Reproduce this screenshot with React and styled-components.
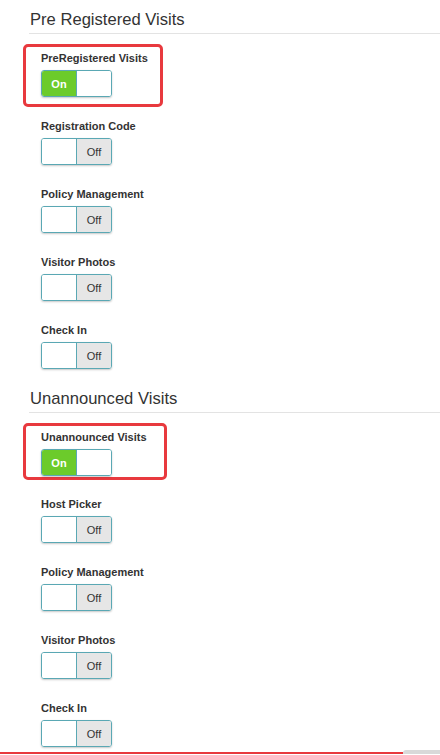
import React from "react";
import styled, { createGlobalStyle } from "styled-components";

const GlobalStyle = createGlobalStyle`
  body {
    margin: 0;
    background: #fff;
    font-family: "Liberation Sans", Arial, sans-serif;
    color: #333;
  }
`;

const Page = styled.div`
  padding-top: 10px;
  width: 440px;
  overflow: hidden;
`;

const Section = styled.section`
  & + & {
    margin-top: 20px;
  }
`;

const Heading = styled.h2`
  margin: 0 0 0 29px;
  padding: 0 0 3px 1px;
  font-size: 16.6px;
  line-height: 20px;
  font-weight: normal;
  color: #333;
  border-bottom: 1px solid #e3e3e3;
`;

const Highlight = styled.div`
  box-sizing: border-box;
  width: ${(p) => p.$width}px;
  margin: 10px 0 ${(p) => p.$mb}px 23px;
  padding: 5px 0 ${(p) => p.$pb}px 15px;
  border: 3px solid #e8393e;
  border-radius: 5px;
`;

const Item = styled.div`
  margin-left: ${(p) => (p.$boxed ? 0 : 41)}px;
  & + & {
    margin-top: 23px;
  }
`;

const Label = styled.div`
  font-size: 11px;
  line-height: 13px;
  font-weight: bold;
  color: #333;
  margin-bottom: 5px;
  white-space: nowrap;
`;

const Toggle = styled.div`
  display: flex;
  width: 71px;
  height: 27px;
  box-sizing: border-box;
  border: 1px solid #5aa8b4;
  border-radius: 3px;
  overflow: hidden;
  box-shadow: 0 1px 2px rgba(0, 0, 0, 0.22);
`;

const Half = styled.div`
  flex: 1;
  display: flex;
  align-items: center;
  justify-content: center;
  font-size: 11px;
  background: ${(p) => p.$bg};
  color: ${(p) => (p.$on ? "#fff" : "#333")};
  font-weight: ${(p) => (p.$on ? "bold" : "normal")};
  & + & {
    border-left: 1px solid #5aa8b4;
  }
`;

const Footer = styled.div`
  margin-top: 3px;
  height: 4px;
  display: flex;
  align-items: flex-end;
`;

const RedLine = styled.div`
  flex: 1;
  height: 2px;
  background: #e8393e;
`;

const GrayTab = styled.div`
  width: 37px;
  height: 4px;
  background: #d9d9d9;
  border-radius: 3px 0 0 0;
`;

function Switch({ on }) {
  return (
    <Toggle>
      {on ? (
        <>
          <Half $on $bg="#6ccb2b">On</Half>
          <Half $bg="#fff" />
        </>
      ) : (
        <>
          <Half $bg="#fff" />
          <Half $bg="#e6e6e6">Off</Half>
        </>
      )}
    </Toggle>
  );
}

const sections = [
  {
    title: "Pre Registered Visits",
    main: "PreRegistered Visits",
    box: { width: 140, pb: 7, mb: 13 },
    items: ["Registration Code", "Policy Management", "Visitor Photos", "Check In"],
  },
  {
    title: "Unannounced Visits",
    main: "Unannounced Visits",
    box: { width: 144, pb: 1, mb: 18 },
    items: ["Host Picker", "Policy Management", "Visitor Photos", "Check In"],
  },
];

export default function App() {
  return (
    <>
      <GlobalStyle />
      <Page>
        {sections.map((s) => (
          <Section key={s.title}>
            <Heading>{s.title}</Heading>
            <Highlight $width={s.box.width} $pb={s.box.pb} $mb={s.box.mb}>
              <Item $boxed>
                <Label>{s.main}</Label>
                <Switch on />
              </Item>
            </Highlight>
            {s.items.map((name) => (
              <Item key={name}>
                <Label>{name}</Label>
                <Switch />
              </Item>
            ))}
          </Section>
        ))}
        <Footer>
          <RedLine />
          <GrayTab />
        </Footer>
      </Page>
    </>
  );
}
